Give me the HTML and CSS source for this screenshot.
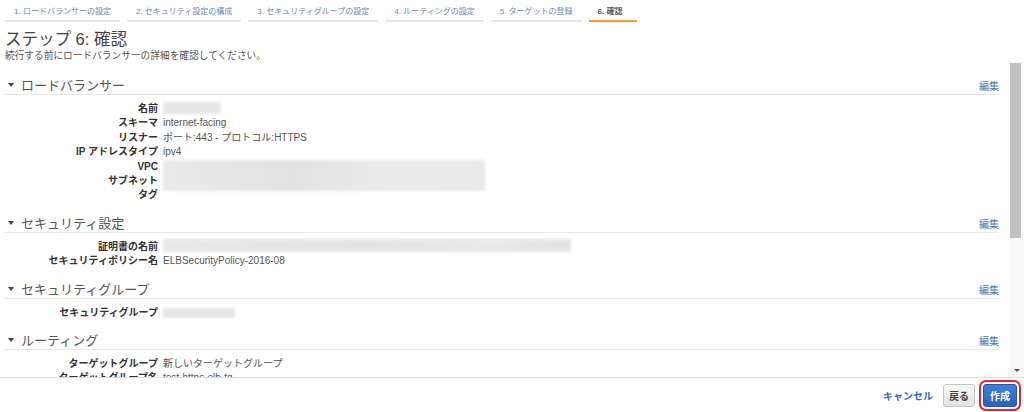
FILE: index.html
```html
<!DOCTYPE html>
<html lang="ja">
<head>
  <meta charset="UTF-8" />
  <meta name="viewport" content="width=device-width, initial-scale=1.0" />
  <title>ステップ 6: 確認</title>
  <link rel="stylesheet" href="styles.css">
</head>
<body>
  <div class="tabs">
    <div class="tab">1. ロードバランサーの設定</div>
    <div class="tab">2. セキュリティ設定の構成</div>
    <div class="tab">3. セキュリティグループの設定</div>
    <div class="tab">4. ルーティングの設定</div>
    <div class="tab">5. ターゲットの登録</div>
    <div class="tab active">6. 確認</div>
  </div>

  <h1 class="title">ステップ 6: 確認</h1>
  <p class="desc">続行する前にロードバランサーの詳細を確認してください。</p>

  <div class="panel">
    <div class="review">
      <section class="section">
        <div class="section-head">
          <h2><span class="caret"></span>ロードバランサー</h2>
          <a class="edit">編集</a>
        </div>
        <div class="fields">
          <div class="label">名前</div><div class="value"><span class="blur blur-name"></span></div>
          <div class="label">スキーマ</div><div class="value">internet-facing</div>
          <div class="label">リスナー</div><div class="value">ポート:443 - プロトコル:HTTPS</div>
          <div class="label">IP アドレスタイプ</div><div class="value">ipv4</div>
          <div class="label">VPC</div><div class="value span2"><span class="blur blur-net"></span></div>
          <div class="label">サブネット</div>
          <div class="label">タグ</div><div class="value"></div>
        </div>
      </section>

      <section class="section">
        <div class="section-head">
          <h2><span class="caret"></span>セキュリティ設定</h2>
          <a class="edit">編集</a>
        </div>
        <div class="fields">
          <div class="label">証明書の名前</div><div class="value"><span class="blur blur-cert"></span></div>
          <div class="label">セキュリティポリシー名</div><div class="value">ELBSecurityPolicy-2016-08</div>
        </div>
      </section>

      <section class="section">
        <div class="section-head">
          <h2><span class="caret"></span>セキュリティグループ</h2>
          <a class="edit">編集</a>
        </div>
        <div class="fields">
          <div class="label">セキュリティグループ</div><div class="value"><span class="blur blur-sg"></span></div>
        </div>
      </section>

      <section class="section">
        <div class="section-head">
          <h2><span class="caret"></span>ルーティング</h2>
          <a class="edit">編集</a>
        </div>
        <div class="fields">
          <div class="label">ターゲットグループ</div><div class="value">新しいターゲットグループ</div>
          <div class="label">ターゲットグループ名</div><div class="value">test-https-elb-tg</div>
          <div class="label">ポート</div><div class="value">80</div>
          <div class="label">プロトコル</div><div class="value">HTTP</div>
        </div>
      </section>
    </div>
    <div class="scrollbar">
      <div class="thumb"></div>
      <div class="arrow"></div>
    </div>
  </div>

  <div class="actions">
    <a class="cancel">キャンセル</a>
    <button class="btn btn-back">戻る</button>
    <button class="btn btn-create">作成</button>
  </div>
</body>
</html>
```

FILE: styles.css
```css
body {
  margin: 0;
  font-family: "Liberation Sans", "Noto Sans CJK JP", sans-serif;
  color: #444;
  background: #fff;
}
.tabs {
  display: flex;
  gap: 7px;
  padding: 0 5px;
}
.tab {
  font-size: 8px;
  line-height: 12px;
  padding: 6px 9px 2px;
  color: #6a88c0;
  border-bottom: 2px solid #e8e8e8;
  white-space: nowrap;
}
.tab.active {
  color: #555;
  font-weight: bold;
  padding-right: 14px;
  border-bottom-color: #f89b35;
}
.title {
  margin: 7px 5px 0;
  font-size: 16.5px;
  line-height: 21px;
  font-weight: normal;
  color: #444;
}
.desc {
  margin: 0 5px;
  font-size: 9.7px;
  line-height: 12px;
  color: #555;
}
.panel {
  display: flex;
  height: 315px;
  border-bottom: 1px solid #dedede;
}
.review {
  flex: 1;
  overflow: hidden;
  padding: 16px 10px 0 5px;
}
.section {
  margin-bottom: 13px;
}
.section-head {
  display: flex;
  justify-content: space-between;
  align-items: baseline;
  border-bottom: 1px solid #e8e8e8;
}
.section-head h2 {
  margin: 0;
  font-size: 13px;
  line-height: 16px;
  font-weight: normal;
  color: #555;
}
.caret {
  display: inline-block;
  width: 0;
  height: 0;
  border-left: 3.5px solid transparent;
  border-right: 3.5px solid transparent;
  border-top: 4px solid #444;
  margin: 0 7px 0 3px;
  vertical-align: 3px;
}
.edit {
  font-size: 10px;
  color: #4a74b8;
  cursor: pointer;
}
.fields {
  display: grid;
  grid-template-columns: 153px 1fr;
  grid-auto-rows: 14.4px;
  column-gap: 5px;
  padding-top: 7px;
  font-size: 10px;
  line-height: 14.4px;
}
.label {
  grid-column: 1;
  text-align: right;
  font-weight: bold;
  color: #333;
  white-space: nowrap;
}
.value {
  grid-column: 2;
  color: #555;
}
.span2 {
  grid-row: span 2;
}
.blur {
  display: block;
  background: #e6e6e6;
  filter: blur(1.5px);
}
.blur-name {
  width: 58px;
  height: 12px;
  margin-top: 0;
}
.blur-net {
  width: 322px;
  height: 31px;
  margin-top: 0;
  background: linear-gradient(90deg, #e9e9e9, #e2e2e2 40%, #ececec 75%, #e8e8e8);
}
.blur-cert {
  width: 408px;
  height: 13px;
  margin-top: -1px;
  background: linear-gradient(90deg, #e8e8e8, #e4e4e4 50%, #e9e9e9 80%, #e3e3e3);
}
.blur-sg {
  width: 72px;
  height: 10px;
  margin-top: 2px;
}
.scrollbar {
  width: 15px;
  display: flex;
  flex-direction: column;
  justify-content: space-between;
  align-items: flex-start;
  background: #fafafa;
}
.thumb {
  width: 11px;
  height: 175px;
  margin: 1px 0 0 1px;
  background: #c1c1c1;
}
.arrow {
  width: 0;
  height: 0;
  margin: 0 0 5px 5px;
  border-left: 3px solid transparent;
  border-right: 3px solid transparent;
  border-top: 3px solid #505050;
}
.actions {
  display: flex;
  justify-content: flex-end;
  align-items: center;
  height: 34px;
  padding-right: 7px;
}
.cancel {
  font-size: 10px;
  font-weight: bold;
  color: #2e6bc6;
  margin-right: 10px;
  cursor: pointer;
}
.btn {
  font-family: inherit;
  font-size: 10px;
  font-weight: bold;
  height: 23px;
  border-radius: 3px;
  cursor: pointer;
}
.btn-back {
  padding: 0 5px;
  color: #444;
  background: linear-gradient(#f7f7f7, #e2e2e2);
  border: 1px solid #c4c4c4;
  margin-right: 8px;
}
.btn-create {
  padding: 0 6px;
  color: #fff;
  background: linear-gradient(#3f80db, #2a62bd);
  border: 1px solid #2457a8;
  outline: 2px solid #e5252f;
  outline-offset: 2px;
}
```
